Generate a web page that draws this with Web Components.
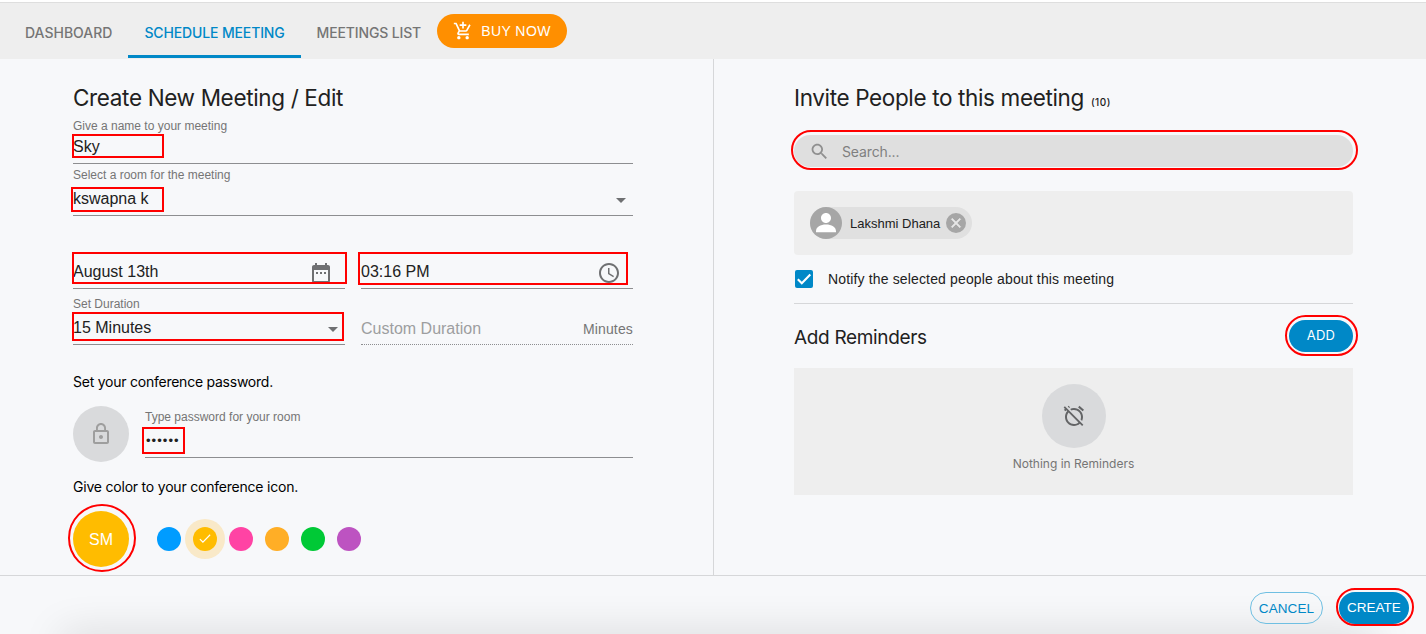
<!DOCTYPE html>
<html lang="en">
<head>
<meta charset="utf-8">
<title>Schedule Meeting</title>
<style>
html,body{margin:0;height:100%;overflow:hidden;background:#f7f8fa}
</style>
</head>
<body>
<meeting-app></meeting-app>
<script>
const define=(name,html,init)=>{
  const t=document.createElement('template');
  t.innerHTML=html;
  customElements.define(name,class extends HTMLElement{
    constructor(){super();this.attachShadow({mode:'open'}).append(t.content.cloneNode(true));}
    connectedCallback(){if(init)init(this,this.shadowRoot);}
  });
};

/* One line of text: size, line height, colour, tracking and family come from custom properties */
define('ui-text',`<style>
:host{display:block;white-space:nowrap;font:var(--w,400) var(--s,14px)/var(--lh,20px) Inter,sans-serif;letter-spacing:var(--ls,0);color:var(--c,#212121)}
:host([sans]){font-family:"Liberation Sans",Arial,sans-serif}
</style><slot></slot>`);

define('ui-icon',`<style>:host{display:block;width:var(--i,24px);height:var(--i,24px);flex:none}svg{display:block;width:100%;height:100%;fill:currentColor;stroke:currentColor;stroke-width:var(--sw,0)}</style><svg viewBox="0 0 24 24"><path/></svg>`,
(el,r)=>{
  const p={
    cart:'M11 9h2V6h3V4h-3V1h-2v3H8v2h3v3zm-4 9c-1.1 0-1.99.9-1.99 2S5.9 22 7 22s2-.9 2-2-.9-2-2-2zm10 0c-1.1 0-1.99.9-1.99 2s.89 2 1.99 2 2-.9 2-2-.9-2-2-2zm-9.83-3.25l.03-.12.9-1.63h7.45c.75 0 1.41-.41 1.75-1.03l3.86-7.01L19.42 4h-.01l-1.1 2-2.76 5H8.53l-.13-.27L6.16 6l-.95-2-.94-2H1v2h2l3.6 7.59-1.35 2.45c-.16.28-.25.61-.25.96 0 1.1.9 2 2 2h12v-2H7.42c-.13 0-.25-.11-.25-.25z',
    down:'M7 10l5 5 5-5z',
    date:'M9 11H7v2h2v-2zm4 0h-2v2h2v-2zm4 0h-2v2h2v-2zm2-7h-1V2h-2v2H8V2H6v2H5c-1.11 0-1.99.9-1.99 2L3 20c0 1.1.89 2 2 2h14c1.1 0 2-.9 2-2V6c0-1.1-.9-2-2-2zm0 16H5V9h14v11z',
    time:'M11.99 2C6.47 2 2 6.48 2 12s4.47 10 9.99 10C17.52 22 22 17.52 22 12S17.52 2 11.99 2zM12 20c-4.42 0-8-3.58-8-8s3.58-8 8-8 8 3.58 8 8-3.58 8-8 8zm.5-13H11v6l5.25 3.15.75-1.23-4.5-2.67z',
    lock:'M12 17c1.1 0 2-.9 2-2s-.9-2-2-2-2 .9-2 2 .9 2 2 2zm6-9h-1V6c0-2.76-2.24-5-5-5S7 3.24 7 6v2H6c-1.1 0-2 .9-2 2v10c0 1.1.9 2 2 2h12c1.1 0 2-.9 2-2V10c0-1.1-.9-2-2-2zM8.9 6c0-1.71 1.39-3.1 3.1-3.1s3.1 1.39 3.1 3.1v2H8.9V6zM18 20H6V10h12v10z',
    check:'M20.3 6.2l-1.2-1.2L8.9 15.5l-4-4-1.2 1.2 5.2 5.3z',
    search:'M15.5 14h-.79l-.28-.27C15.41 12.59 16 11.11 16 9.5 16 5.91 13.09 3 9.5 3S3 5.91 3 9.5 5.91 16 9.5 16c1.61 0 3.09-.59 4.23-1.57l.27.28v.79l5 4.99L20.49 19l-4.99-5zm-6 0C7.01 14 5 11.99 5 9.5S7.01 5 9.5 5 14 7.01 14 9.5 11.99 14 9.5 14z',
    person:'M12 12c2.21 0 4-1.79 4-4s-1.79-4-4-4-4 1.79-4 4 1.79 4 4 4zm0 1.2c-4.4 0-8 1.8-8 5.4v.8h16v-.8c0-3.6-3.6-5.4-8-5.4z',
    cross:'M19 6.41L17.59 5 12 10.59 6.41 5 5 6.41 10.59 12 5 17.59 6.41 19 12 13.41 17.59 19 19 17.59 13.41 12z',
    alarm:'M12 6c3.87 0 7 3.13 7 7 0 .84-.16 1.65-.43 2.4l1.52 1.52c.58-1.19.91-2.51.91-3.92 0-4.97-4.03-9-9-9-1.41 0-2.73.33-3.92.91L9.6 6.43C10.35 6.16 11.16 6 12 6zm10-.28l-4.6-3.86-1.29 1.53 4.6 3.86L22 5.72zM2.92 2.29L1.65 3.57 2.98 4.9l-1.11.93 1.42 1.42 1.11-.94.8.8C3.83 8.69 3 10.75 3 13c0 4.97 4.02 9 9 9 2.25 0 4.31-.83 5.89-2.2l2.2 2.2 1.27-1.27L3.89 3.27l-.97-.98zm13.55 16.1C15.26 19.39 13.7 20 12 20c-3.87 0-7-3.13-7-7 0-1.7.61-3.26 1.61-4.47l9.86 9.86zM8.02 3.28L6.6 1.86l-.86.71 1.42 1.42.86-.71z'
  };
  r.querySelector('path').setAttribute('d',p[el.getAttribute('name')]);
});

define('nav-tab',`<style>
:host{display:flex;align-items:center;box-sizing:border-box;height:55px;padding:7px 16px 0;border-bottom:3px solid transparent}
:host{font:500 14px/20px Inter,sans-serif;letter-spacing:var(--ls,0);color:#757575;white-space:nowrap}
:host([active]){color:#0088c7;border-color:#0088c7}
</style><slot></slot>`);

define('pill-button',`<style>
:host{display:flex;align-items:center;justify-content:center;box-sizing:border-box;flex:none;white-space:nowrap;width:var(--bw);height:var(--bh,32px);border-radius:20px;background:#0088c7;color:#fff;font:400 var(--s,14px)/20px "Liberation Sans",Arial,sans-serif;letter-spacing:var(--ls,0);padding:var(--pt,0) 0 var(--pb,0)}
:host([outline]){background:#fff0;border:1px solid #6fbfe2;color:#0088c7}
:host([orange]){background:#ff8f00}
:host([inter]){font-family:Inter,sans-serif}
::slotted(ui-icon){margin-right:8px}
</style><slot></slot>`);

define('form-field',`<style>
:host{display:flex;flex-direction:column;box-sizing:border-box;height:var(--h);border-bottom:1px solid #8d8e90;min-width:0}
:host([dotted]){border-bottom-style:dotted}
.l{font:12px/16px "Liberation Sans",Arial,sans-serif;color:#757575;white-space:nowrap}
.l:empty{display:none}
.v{display:flex;justify-content:space-between;align-items:center;flex:1;padding:var(--vp,0);font:16px/20px "Liberation Sans",Arial,sans-serif;color:var(--c,#212121);white-space:nowrap}
::slotted(ui-icon){color:#6f7072;margin-top:2px}
</style><div class="l"></div><div class="v"><slot></slot><slot name="end"></slot></div>`,
(el,r)=>{r.querySelector('.l').textContent=el.getAttribute('label')||'';});

define('round-badge',`<style>
:host{display:flex;align-items:center;justify-content:center;flex:none;width:var(--d,56px);height:var(--d,56px);border-radius:50%;background:var(--bg,#d9dadc);color:var(--c,#9e9e9e)}
</style><slot></slot>`);

define('color-swatch',`<style>
:host{display:flex;align-items:center;justify-content:center;width:24px;height:24px;border-radius:50%;background:var(--bg);color:#fff}
:host([selected]){box-shadow:0 0 0 8px #f9e9c8}
ui-icon{display:none;--i:16px}
:host([selected]) ui-icon{display:block}
</style><ui-icon name="check"></ui-icon>`);

define('person-chip',`<style>
:host{display:flex;align-items:center;box-sizing:border-box;width:162px;height:32px;border-radius:16px;background:#e0e0e0;padding-right:6px}
ui-text{flex:1;padding:1px 0 0 8px;--s:13px}
</style><round-badge style="--d:32px;--bg:#a6a6a6;--c:#fff"><ui-icon name="person" style="--i:30px"></ui-icon></round-badge>
<ui-text sans><slot></slot></ui-text>
<round-badge style="--d:20px;--bg:#a6a6a6;--c:#e6e6e6"><ui-icon name="cross" style="--i:16px;--sw:1"></ui-icon></round-badge>`);

define('check-box',`<style>
:host{display:flex;align-items:center;height:18px}
i{display:flex;width:18px;height:18px;border-radius:2px;background:#0088c7;align-items:center;justify-content:center;margin:0 15px 0 1px}
svg{width:18px;height:18px}
</style><i><svg viewBox="0 0 18 18"><path d="M2.8 9.2l4 4 8.5-8.6" fill="none" stroke="#fff" stroke-width="2.1"/></svg></i><slot></slot>`);

/* Red outline laid over a part of the form */
define('mark-box',`<style>
:host{position:absolute;box-sizing:border-box;border:2px solid #f00;border-radius:var(--r,0);pointer-events:none}
</style>`,el=>{
  const [x,y,x2,y2]=el.getAttribute('area').split(' ').map(Number);
  Object.assign(el.style,{left:x+'px',top:y+'px',width:x2-x+'px',height:y2-y+'px'});
});

define('meeting-form',`<style>
:host{display:flex;flex-direction:column;box-sizing:border-box;width:714px;border-right:1px solid #d6d7d9;padding:23px 80px 0 73px}
.two{display:grid;grid-template-columns:1fr 1fr;gap:0 16px}
.pw{display:flex;gap:16px;margin-top:14px}
.pw form-field{flex:1;margin-top:3px}
.colors{display:flex;align-items:center;gap:12px;margin-top:14px}
.colors round-badge{margin-right:16px}
</style>
<ui-text style="--s:22.5px;--lh:32px;--ls:-.35px">Create New Meeting / Edit</ui-text>
<form-field label="Give a name to your meeting" style="--h:46px;--vp:0 0 4px;margin-top:4px">Sky</form-field>
<form-field label="Select a room for the meeting" style="--h:49px;--vp:0;margin-top:3px">kswapna k<ui-icon slot="end" name="down"></ui-icon></form-field>
<div class="two" style="margin-top:39px">
<form-field style="--h:34px;--vp:0">August 13th<ui-icon slot="end" name="date" style="margin-right:12px"></ui-icon></form-field>
<form-field style="--h:34px;--vp:0">03:16 PM<ui-icon slot="end" name="time" style="margin-right:12px"></ui-icon></form-field>
</div>
<div class="two" style="margin-top:7px">
<form-field label="Set Duration" style="--h:49px">15 Minutes<ui-icon slot="end" name="down"></ui-icon></form-field>
<form-field dotted style="--h:49px;--vp:18px 0 0;--c:#9d9ea0">Custom Duration<ui-text slot="end" sans style="--c:#757575;--ls:.15px">Minutes</ui-text></form-field>
</div>
<ui-text style="margin-top:27px;--c:#000;--ls:-.24px">Set your conference password.</ui-text>
<div class="pw"><round-badge><ui-icon name="lock"></ui-icon></round-badge>
<form-field label="Type password for your room" style="--h:49px;--vp:0 0 1px"><ui-text sans style="--s:13px;--ls:1.05px;padding-left:1px">••••••</ui-text></form-field></div>
<ui-text style="margin-top:15px;--c:#000;--ls:-.21px">Give color to your conference icon.</ui-text>
<div class="colors"><round-badge style="--bg:#ffbc00"><ui-text sans style="--s:16px;--c:#fff;padding-top:2px">SM</ui-text></round-badge>
<color-swatch style="--bg:#009cff"></color-swatch><color-swatch selected style="--bg:#ffbc00"></color-swatch><color-swatch style="--bg:#ff43a4"></color-swatch><color-swatch style="--bg:#ffae26"></color-swatch><color-swatch style="--bg:#00c936"></color-swatch><color-swatch style="--bg:#bd53c1"></color-swatch></div>`);

define('invite-panel',`<style>
:host{display:flex;flex-direction:column;box-sizing:border-box;flex:1;padding:23px 73px 0 80px}
.head{display:flex;align-items:baseline;gap:7px}
.search{display:flex;align-items:center;gap:12px;box-sizing:border-box;height:32px;border-radius:16px;background:#dfdfdf;margin-top:21px;padding-left:15px;color:#8f8f8f}
.people{display:flex;align-items:center;box-sizing:border-box;height:64px;border-radius:4px;background:#eee;margin:24px 0 15px;padding-left:16px}
.rem{display:flex;align-items:center;justify-content:space-between;margin-top:15px;padding-top:16px;border-top:1px solid #d6d7d9}
.empty{display:flex;flex-direction:column;align-items:center;box-sizing:border-box;height:127px;background:#eee;margin-top:16px;padding-top:16px}
</style>
<div class="head"><ui-text style="--s:22.5px;--lh:32px;--ls:-.36px">Invite People to this meeting</ui-text><ui-text style="--s:10px;--w:500;--ls:.5px">(10)</ui-text></div>
<div class="search"><ui-icon name="search" style="--i:21px"></ui-icon><ui-text style="--c:#7f7f7f;--ls:-.13px;padding-top:2px">Search...</ui-text></div>
<div class="people"><person-chip>Lakshmi Dhana</person-chip></div>
<check-box><ui-text sans style="--ls:.15px">Notify the selected people about this meeting</ui-text></check-box>
<div class="rem"><ui-text style="--s:19px;--lh:28px;--ls:-.33px;padding-top:4px">Add Reminders</ui-text><pill-button inter style="--bw:64px;--ls:.3px;--s:13px;--pb:2px">ADD</pill-button></div>
<div class="empty"><round-badge style="--d:64px;--c:#636466"><ui-icon name="alarm"></ui-icon></round-badge><ui-text style="--s:12px;--c:#757575;margin-top:6px">Nothing in Reminders</ui-text></div>`);

define('meeting-app',`<style>
:host{display:flex;flex-direction:column;position:relative;height:634px;overflow:hidden;background:#f7f8fa}
.top{height:2px;background:#fff}
nav{display:flex;box-sizing:border-box;height:57px;background:#eee;border-top:1px solid #dedede;padding-left:9px}
nav pill-button{margin:11px 0 0}
main{display:flex;height:516px}
footer{display:flex;justify-content:flex-end;box-sizing:border-box;position:relative;height:59px;border-top:1px solid #d6d7d9;padding:16px 17px 0 0;gap:16px}
.shade{position:absolute;left:65px;right:55px;bottom:-20px;height:16px;box-shadow:0 0 40px 4px rgba(0,0,0,.15)}
footer pill-button{position:relative}
</style>
<div class="top"></div>
<nav><nav-tab>DASHBOARD</nav-tab><nav-tab active style="--ls:-.14px">SCHEDULE MEETING</nav-tab><nav-tab style="--ls:-.15px">MEETINGS LIST</nav-tab>
<pill-button orange style="--bw:130px;--bh:34px;--ls:.45px"><ui-icon name="cart" style="--i:20px"></ui-icon>BUY NOW</pill-button></nav>
<main><meeting-form></meeting-form><invite-panel></invite-panel></main>
<footer><div class="shade"></div><pill-button outline style="--bw:73px;--s:13.5px;--ls:.1px;--pt:2px">CANCEL</pill-button><pill-button style="--bw:70px;--s:13.5px;--ls:0;--pb:1px">CREATE</pill-button></footer>
<mark-box area="72 134 164 158"></mark-box><mark-box area="71 187 164 212"></mark-box><mark-box area="72 252 347 284"></mark-box><mark-box area="358 252 628 285"></mark-box><mark-box area="72 312 344 341"></mark-box><mark-box area="142 427 185 454"></mark-box>
<mark-box area="68 504 136 572" style="--r:50%"></mark-box><mark-box area="791 130 1358 170" style="--r:20px"></mark-box><mark-box area="1285 315 1358 356" style="--r:20.5px"></mark-box><mark-box area="1336 588 1414 626" style="--r:19px"></mark-box>`);
</script>
</body>
</html>
